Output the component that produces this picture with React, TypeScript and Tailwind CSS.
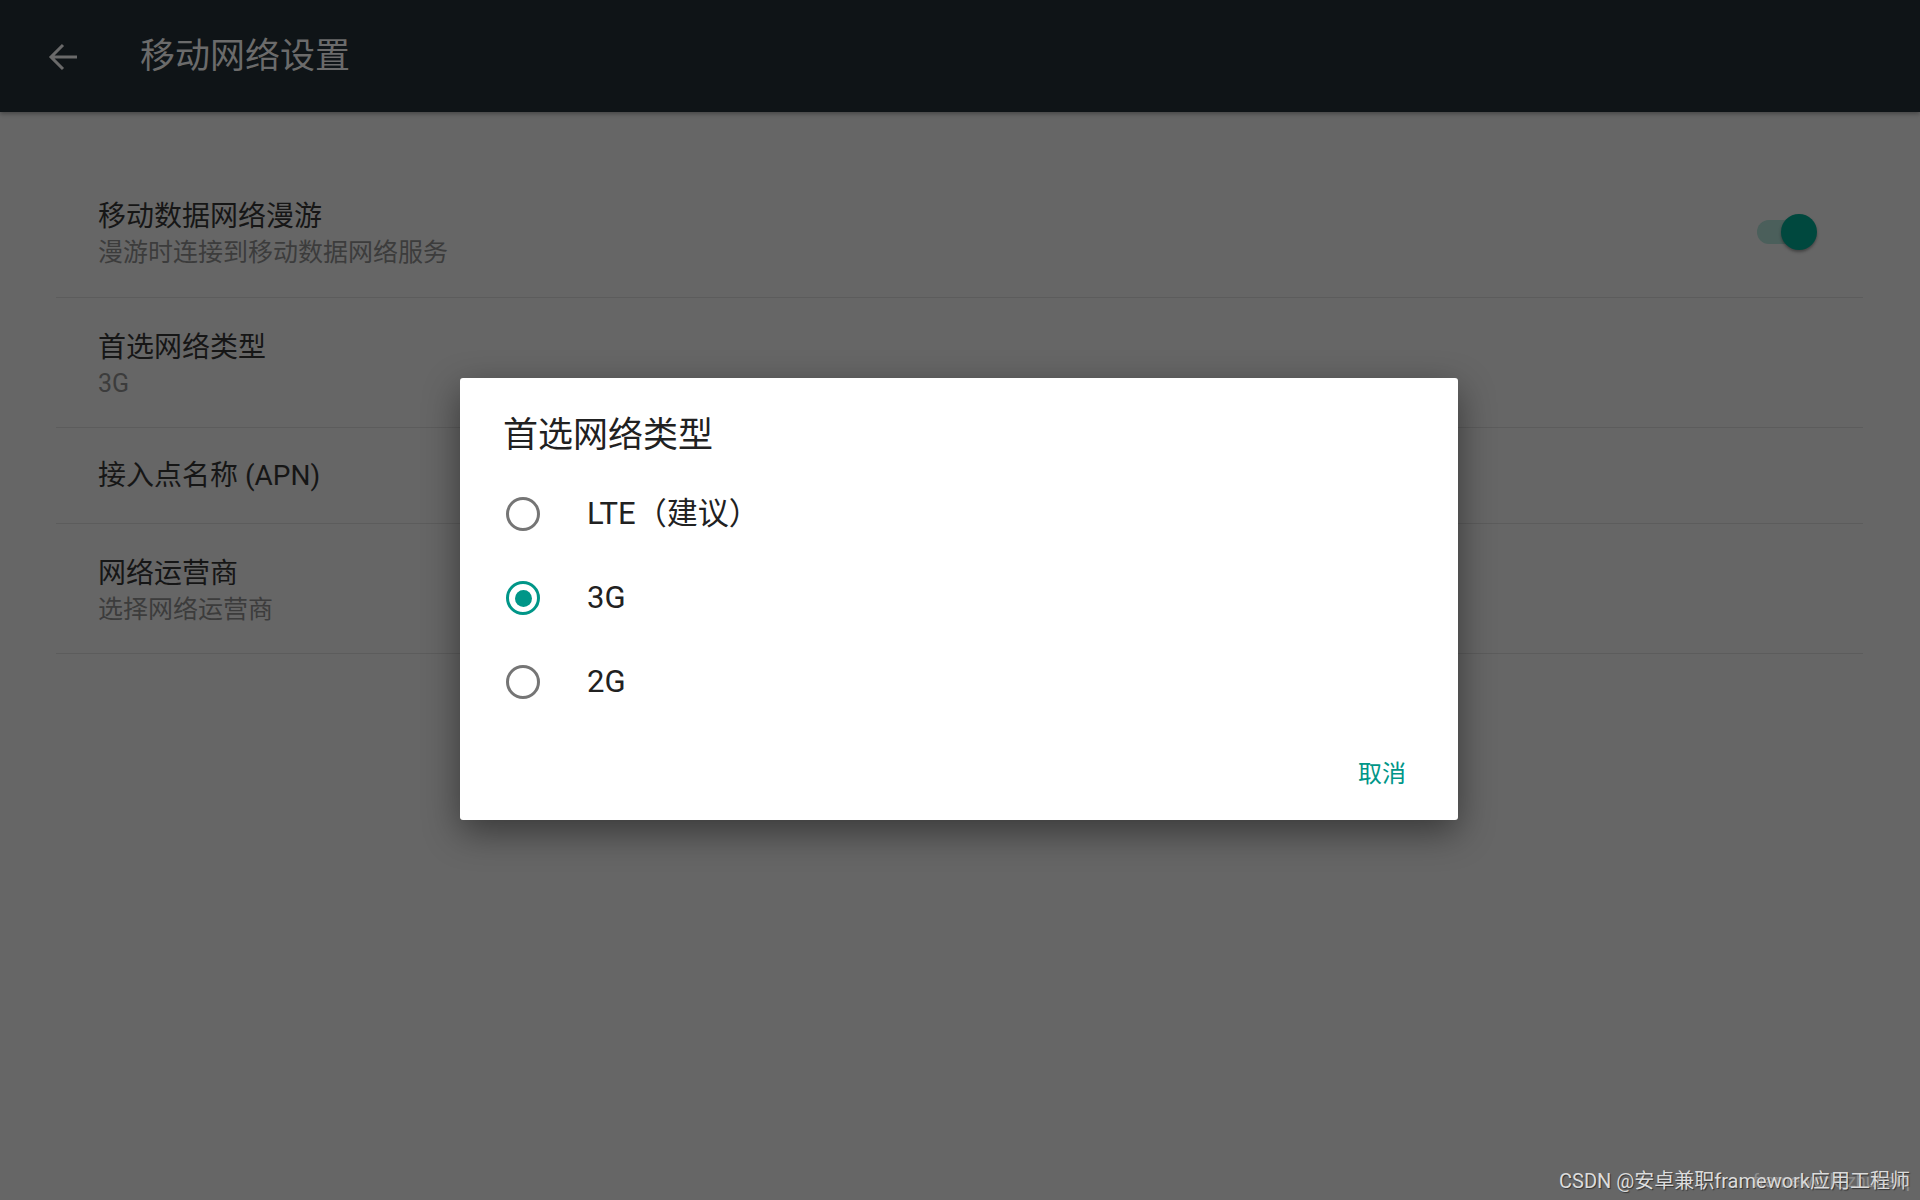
import React from "react";

const FONT = { fontFamily: 'Roboto, "Noto Sans CJK SC", sans-serif' };

function Row({ title, sub, h, toggle }: { title: string; sub?: string; h: string; toggle?: boolean }) {
  return (
    <div className={`flex items-center border-b border-[#5c5c5c] pl-[42px] ${h}`}>
      <div className={`flex flex-1 flex-col ${sub ? "pt-[6px]" : "pt-[1px]"}`}>
        <div className="text-[28px] leading-[36px] text-[#161616]">{title}</div>
        {sub && <div className="text-[25px] leading-[36px] text-[#3c3c3c]">{sub}</div>}
      </div>
      {toggle && (
        <div className="relative mr-[46px] h-[36px] w-[60px]">
          <div className="absolute left-0 top-[6px] h-[24px] w-[56px] rounded-full bg-[#4b5f5b]" />
          <div className="absolute left-[24px] top-0 h-[36px] w-[36px] rounded-full bg-[#00483e] shadow-[0_2px_3px_rgba(0,0,0,0.35)]" />
        </div>
      )}
    </div>
  );
}

function Radio({ label, checked }: { label: string; checked?: boolean }) {
  return (
    <div className="flex h-[84px] items-center pl-[46px]">
      <div
        className={`flex h-[34px] w-[34px] items-center justify-center rounded-full border-[3px] ${
          checked ? "border-[#009688]" : "border-[#757575]"
        }`}
      >
        {checked && <div className="h-[17px] w-[17px] rounded-full bg-[#009688]" />}
      </div>
      <div className="ml-[47px] text-[31px] leading-[40px] text-[#212121]">{label}</div>
    </div>
  );
}

export default function App() {
  return (
    <div className="relative h-[1200px] w-[1920px] overflow-hidden bg-[#666666]" style={FONT}>
      <div className="flex h-[112px] items-center bg-[#0f1417] pt-[2px] shadow-[0_2px_4px_rgba(0,0,0,0.3)]">
        <svg className="ml-[47px]" width="32" height="32" viewBox="0 0 32 32" fill="none">
          <path d="M30 16H5M16 4L4 16l12 12" stroke="#6a6a6a" strokeWidth="3" />
        </svg>
        <div className="ml-[61px] text-[35px] leading-[44px] text-[#6b6b6b]">移动网络设置</div>
      </div>

      <div className="ml-[56px] mr-[57px] pt-[55px]">
        <Row h="h-[131px]" title="移动数据网络漫游" sub="漫游时连接到移动数据网络服务" toggle />
        <Row h="h-[130px]" title="首选网络类型" sub="3G" />
        <Row h="h-[96px]" title="接入点名称 (APN)" />
        <Row h="h-[130px]" title="网络运营商" sub="选择网络运营商" />
      </div>

      <div className="absolute left-[460px] top-[378px] flex h-[442px] w-[998px] flex-col rounded-[3px] bg-white shadow-[0_12px_36px_rgba(0,0,0,0.45)]">
        <div className="pl-[43px] pt-[36px] text-[35px] leading-[44px] text-[#212121]">首选网络类型</div>
        <div className="mt-[14px] flex flex-col">
          <Radio label="LTE（建议）" />
          <Radio label="3G" checked />
          <Radio label="2G" />
        </div>
        <div className="mt-[26px] flex h-[48px] items-center justify-end pr-[52px]">
          <div className="text-[24px] leading-[32px] text-[#009688]">取消</div>
        </div>
      </div>

      <div className="absolute bottom-[7px] right-[10px] text-[20px] leading-[24px] text-[#dcdcdc] [text-shadow:1px_1px_1px_rgba(0,0,0,0.5)]">
        CSDN @安卓兼职framework应用工程师
      </div>
      <div className="absolute bottom-[7px] right-[10px] text-[18px] leading-[24px] text-[#c8c8c8] opacity-40">
        framework_zhuhaiq
      </div>
    </div>
  );
}
